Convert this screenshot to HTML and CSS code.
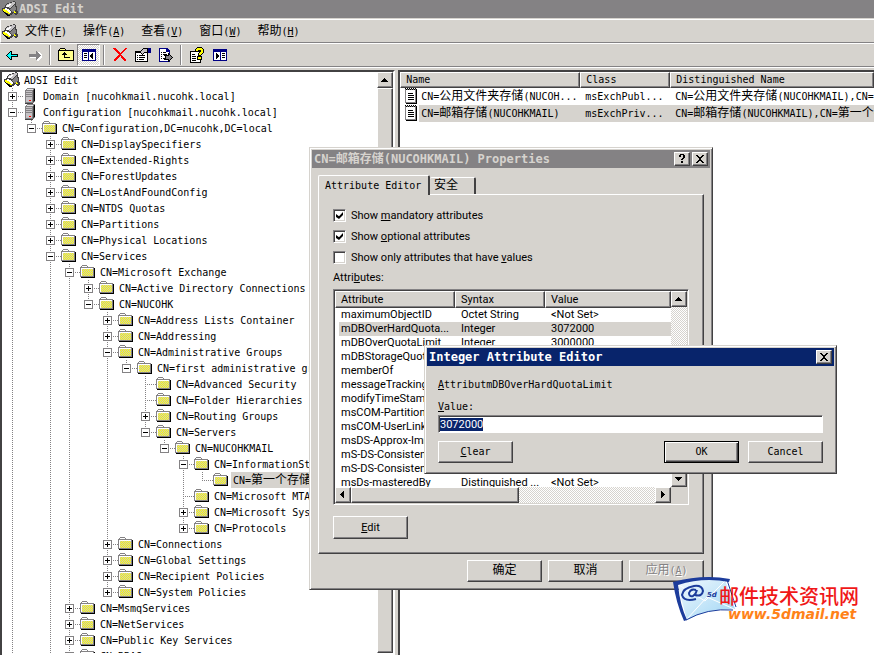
FILE: index.html
```html
<!DOCTYPE html>
<html lang="zh-CN">
<head>
    <meta charset="UTF-8">
    <meta name="viewport" content="width=device-width, initial-scale=1.0">
    <title>ADSI Edit</title>
    <link rel="stylesheet" href="styles.css">
</head>
<body>
    <!-- icon sprite -->
    <svg class="sprite" aria-hidden="true">
        <defs>
            <pattern id="dither" width="2" height="2" patternUnits="userSpaceOnUse">
                <path fill="#c6c3c6" d="M0 0h2v2H0z"/>
                <path fill="#ffff00" d="M0 0h1v1H0zM1 1h1v1H1z"/>
            </pattern>
        </defs>
        <symbol id="i-folder" viewBox="0 0 16 16">
            <path fill="#848284" d="M0 3h1V2h1V1h5v1h1v1h6v10H0V3z"/>
            <path fill="#fff" d="M2 2h5v1H2zM1 4h12v1H1zM1 5h1v7H1z"/>
            <path fill="url(#dither)" d="M2 5h11v7H2z"/>
            <path fill="#000" d="M14 4h1v10H1v-1h13z"/>
        </symbol>
        <symbol id="i-server" viewBox="0 0 16 16">
            <path fill="#848284" d="M4 0h8v13l-2 2H2V2z"/>
            <path fill="#e6e6e6" d="M4 1h6L9 2H3z"/>
            <path fill="#c6c3c6" d="M3 3h6v11H3z"/>
            <path fill="#848284" d="M3 4h6v1H3zM3 6h6v1H3zM3 8h6v1H3z"/>
            <path fill="#424142" d="M10 2h1v12h-1zM2 15h8v1H2z"/>
            <path fill="#000" d="M11 1h1v12h-1z"/>
            <path fill="#f00" d="M6 12h2v1H6z"/>
        </symbol>
        <symbol id="i-app" viewBox="0 0 16 16">
            <path fill="#424142" d="M4 3L9 1l4-1 1 2 1 6v2h1v3l-2 1-3-2-2 2H7L0 10V7l3-1z"/>
            <path fill="#c6c3c6" d="M5 3l7-2 1 1-4 5-5-1z"/>
            <path fill="#fff" d="M5 4l4-1-3 3H4z"/>
            <path fill="#848284" d="M13 3l1 5-3 3-3-2 3-4z"/>
            <path fill="#ffff00" d="M1 8l3 1 4 3-1 1-6-3zM12 10l3 2h-2l-2-1z"/>
            <path fill="#fff" d="M3 7l3 1 4 3-2 1-4-3-2-1z"/>
            <path fill="#000" d="M1 10l6 4h1v1H6L1 11z"/>
        </symbol>
        <symbol id="i-note" viewBox="0 0 16 16">
            <path fill="#848284" d="M2 1h11v14H2z"/>
            <path fill="#fff" d="M3 2h9v12H3z"/>
            <path fill="#000" d="M13 1h1v15H3v-1h10zM2 0h1v1H2zM4 0h1v1H4zM6 0h1v1H6zM8 0h1v1H8zM10 0h1v1h-1zM12 0h1v1h-1zM3 1h1v1H3zM5 1h1v1H5zM7 1h1v1H7zM9 1h1v1H9zM11 1h1v1h-1zM5 5h5v1H5zM5 7h6v1H5zM5 9h6v1H5zM5 11h6v1H5z"/>
        </symbol>
        <symbol id="i-back" viewBox="0 0 16 16">
            <path fill="#000" d="M2 8h1V7h1V6h1V5h1V4h2v3h6v3H8v3H6v-1H5v-1H4v-1H3V9H2z"/>
            <path fill="#00ffff" d="M3 8h1V7h1V6h1V5h1v3h6v1H7v3H6v-1H5v-1H4V9H3z"/>
        </symbol>
        <symbol id="i-forward" viewBox="0 0 16 16">
            <path fill="#fff" d="M3 8h7V5h2l3 3v2l-4 4h-1v-3H3z"/>
            <path fill="#848284" d="M2 7h7V4h1v1h1v1h1v1h1v1h1v1h-1v1h-1v1h-1v1h-1v1H9v-3H2z"/>
        </symbol>
        <symbol id="i-up" viewBox="0 0 16 16">
            <path fill="#000" d="M0 3h1V2h1V1h5v1h1v1h8v11H0z"/>
            <path fill="#ffff8c" d="M2 2h5v1H2zM1 4h14v9H1z"/>
            <path fill="#000" d="M6 5h1v1h1v1h1v1H7v2h5v1H6V8H4V7h1V6h1z"/>
        </symbol>
        <symbol id="i-panes" viewBox="0 0 16 16">
            <path fill="#000084" d="M1 2h14v12H1z"/>
            <path fill="#fff" d="M2 5h5v8H2zM8 5h6v8H8z"/>
            <path fill="#000" d="M3 6h3v1H3zM3 8h3v1H3zM3 10h3v1H3zM12 6v6h-1v-1h-1v-1H9V8h1V7h1V6z"/>
        </symbol>
        <symbol id="i-show" viewBox="0 0 16 16">
            <path fill="#000084" d="M1 2h14v12H1z"/>
            <path fill="#fff" d="M2 5h6v8H2zM9 5h5v8H9z"/>
            <path fill="#000" d="M10 6h3v1h-3zM10 8h3v1h-3zM10 10h3v1h-3zM4 6h1v1h1v1h1v2H6v1H5v1H4z"/>
        </symbol>
        <symbol id="i-delete" viewBox="0 0 16 16">
            <path fill="#f00" d="M1 1h3v1h1v1h1v1h1v1h1v1h1V5h1V4h1V3h1V2h1V1h2v1h-1v1h-1v1h-1v1h-1v1h-1v1h-1v1h1v1h1v1h1v1h1v1h1v2h-2v-1h-1v-1h-1v-1h-1v-1H9V9H8v1H7v1H6v1H5v1H4v1H2v-2h1v-1h1v-1h1V9h1V8h1V7H6V6H5V5H4V4H3V3H2V2H1z"/>
        </symbol>
        <symbol id="i-props" viewBox="0 0 16 16">
            <path fill="#000" d="M0 4h13v11H0z"/>
            <path fill="#fff" d="M1 6h11v8H1z"/>
            <path fill="#000" d="M2 8h1v1H2zM4 8h6v1H4zM2 10h1v1H2zM4 10h6v1H4zM2 12h1v1H2zM4 12h5v1H4zM6 3l2-2h5v5H9L7 8 5 6z"/>
            <path fill="#c6c3c6" d="M7 3l2-1h3v3H9L7 7 6 6z"/>
            <path fill="#000084" d="M13 1h3v5h-3z"/>
        </symbol>
        <symbol id="i-export" viewBox="0 0 16 16">
            <path fill="#000084" d="M1 1h8l3 3v11H1z"/>
            <path fill="#fff" d="M2 2h6v3h3v9H2z"/>
            <path fill="#000" d="M3 5h1v1H3zM5 5h3v1H5zM3 7h1v1H3zM5 7h4v1H5zM3 9h1v1H3zM3 11h1v1H3zM5 11h3v1H5zM6 8h4V6h1v1h1v1h1v1h1v1h1v1h-1v1h-1v1h-1v1h-1v1h-1v-2H6v-1h1v-3H6z"/>
            <path fill="#848284" d="M8 9h3V8l3 2-3 3v-1H8z"/>
        </symbol>
        <symbol id="i-help" viewBox="0 0 16 16">
            <path fill="#000" d="M1 4h11v12H1z"/>
            <path fill="#fff" d="M2 5h9v10H2z"/>
            <path fill="#000" d="M3 7h3v1H3zM3 9h4v1H3zM3 11h4v1H3zM3 13h4v1H3zM8 0h5v1h1v1h1v4h-1v1h-1v1h-1v1h1v4H8V9h1V6h1V4H6V2h1V1h1z"/>
            <path fill="#ffff00" d="M8 1h5v1h1v4h-1v1h-1v1h-2V6h1V5h1V3H9v1H7V2h1zM9 10h3v2H9z"/>
        </symbol>
        <symbol id="i-close" viewBox="0 0 12 10">
            <path fill="#000" d="M2 1h2v1h1v1h2V2h1V1h2v1H9v1H8v1H7v2h1v1h1v1h1v1H8V8H7V7H5v1H4v1H2V8h1V7h1V6h1V4H4V3H3V2H2z"/>
        </symbol>
        <symbol id="i-q" viewBox="0 0 12 10">
            <path fill="#000" d="M3 1h1V0h4v1h1v3H8v1H7v1H5V5h1V4h1V1H5v2H3zM5 7h2v2H5z"/>
        </symbol>
        <symbol id="i-tri-up" viewBox="0 0 8 8"><path d="M3 2h1v1h1v1h1v1h1v1H0V5h1V4h1V3h1z"/></symbol>
        <symbol id="i-tri-down" viewBox="0 0 8 8"><path d="M0 2h7v1H6v1H5v1H4v1H3V5H2V4H1V3H0z"/></symbol>
        <symbol id="i-tri-left" viewBox="0 0 8 8"><path d="M5 0v7H4V6H3V5H2V4H1V3h1V2h1V1h1V0z"/></symbol>
        <symbol id="i-tri-right" viewBox="0 0 8 8"><path d="M2 0v7h1V6h1V5h1V4h1V3H5V2H4V1H3V0z"/></symbol>
    </svg>

    <div class="app">
        <header class="app-title">
            <svg class="icon"><use href="#i-app"/></svg>
            <span>ADSI Edit</span>
        </header>

        <nav class="menubar">
            <svg class="icon"><use href="#i-app"/></svg>
            <button class="menu"><span class="zh">文件</span>(<u>F</u>)</button>
            <button class="menu"><span class="zh">操作</span>(<u>A</u>)</button>
            <button class="menu"><span class="zh">查看</span>(<u>V</u>)</button>
            <button class="menu"><span class="zh">窗口</span>(<u>W</u>)</button>
            <button class="menu"><span class="zh">帮助</span>(<u>H</u>)</button>
        </nav>

        <div class="toolbar">
            <button class="tool" aria-label="Back"><svg class="icon"><use href="#i-back"/></svg></button>
            <button class="tool" aria-label="Forward"><svg class="icon"><use href="#i-forward"/></svg></button>
            <span class="sep"></span>
            <button class="tool" aria-label="Up one level"><svg class="icon"><use href="#i-up"/></svg></button>
            <button class="tool pressed" aria-label="Show/Hide tree"><svg class="icon"><use href="#i-panes"/></svg></button>
            <span class="sep"></span>
            <button class="tool" aria-label="Delete"><svg class="icon"><use href="#i-delete"/></svg></button>
            <button class="tool" aria-label="Properties"><svg class="icon"><use href="#i-props"/></svg></button>
            <button class="tool" aria-label="Export list"><svg class="icon"><use href="#i-export"/></svg></button>
            <span class="sep"></span>
            <button class="tool" aria-label="Help"><svg class="icon"><use href="#i-help"/></svg></button>
            <button class="tool" aria-label="Show pane"><svg class="icon"><use href="#i-show"/></svg></button>
        </div>

        <main class="panes">
            <section class="pane tree-pane">
                <div class="tree-view">
                    <div class="node root"><svg class="icon"><use href="#i-app"/></svg><span class="label">ADSI Edit</span></div>
                    <ul class="tree">
                        <li><div class="node"><i class="exp plus"></i><svg class="icon"><use href="#i-server"/></svg><span class="label wide">Domain [nucohkmail.nucohk.local]</span></div></li>
                        <li class="more"><div class="node"><i class="exp"></i><svg class="icon"><use href="#i-server"/></svg><span class="label wide">Configuration [nucohkmail.nucohk.local]</span></div>
                            <ul>
                                <li><div class="node"><i class="exp"></i><svg class="icon"><use href="#i-folder"/></svg><span class="label">CN=Configuration,DC=nucohk,DC=local</span></div>
                                    <ul>
                                        <li><div class="node"><i class="exp plus"></i><svg class="icon"><use href="#i-folder"/></svg><span class="label">CN=DisplaySpecifiers</span></div></li>
                                        <li><div class="node"><i class="exp plus"></i><svg class="icon"><use href="#i-folder"/></svg><span class="label">CN=Extended-Rights</span></div></li>
                                        <li><div class="node"><i class="exp plus"></i><svg class="icon"><use href="#i-folder"/></svg><span class="label">CN=ForestUpdates</span></div></li>
                                        <li><div class="node"><i class="exp plus"></i><svg class="icon"><use href="#i-folder"/></svg><span class="label">CN=LostAndFoundConfig</span></div></li>
                                        <li><div class="node"><i class="exp plus"></i><svg class="icon"><use href="#i-folder"/></svg><span class="label">CN=NTDS Quotas</span></div></li>
                                        <li><div class="node"><i class="exp plus"></i><svg class="icon"><use href="#i-folder"/></svg><span class="label">CN=Partitions</span></div></li>
                                        <li><div class="node"><i class="exp plus"></i><svg class="icon"><use href="#i-folder"/></svg><span class="label">CN=Physical Locations</span></div></li>
                                        <li class="more"><div class="node"><i class="exp"></i><svg class="icon"><use href="#i-folder"/></svg><span class="label">CN=Services</span></div>
                                            <ul>
                                                <li><div class="node"><i class="exp"></i><svg class="icon"><use href="#i-folder"/></svg><span class="label">CN=Microsoft Exchange</span></div>
                                                    <ul>
                                                        <li><div class="node"><i class="exp plus"></i><svg class="icon"><use href="#i-folder"/></svg><span class="label">CN=Active Directory Connections</span></div></li>
                                                        <li><div class="node"><i class="exp"></i><svg class="icon"><use href="#i-folder"/></svg><span class="label">CN=NUCOHK</span></div>
                                                            <ul>
                                                                <li><div class="node"><i class="exp plus"></i><svg class="icon"><use href="#i-folder"/></svg><span class="label">CN=Address Lists Container</span></div></li>
                                                                <li><div class="node"><i class="exp plus"></i><svg class="icon"><use href="#i-folder"/></svg><span class="label">CN=Addressing</span></div></li>
                                                                <li><div class="node"><i class="exp"></i><svg class="icon"><use href="#i-folder"/></svg><span class="label">CN=Administrative Groups</span></div>
                                                                    <ul>
                                                                        <li><div class="node"><i class="exp"></i><svg class="icon"><use href="#i-folder"/></svg><span class="label">CN=first administrative group</span></div>
                                                                            <ul>
                                                                                <li><div class="node"><i class="leaf"></i><svg class="icon"><use href="#i-folder"/></svg><span class="label">CN=Advanced Security</span></div></li>
                                                                                <li><div class="node"><i class="leaf"></i><svg class="icon"><use href="#i-folder"/></svg><span class="label">CN=Folder Hierarchies</span></div></li>
                                                                                <li><div class="node"><i class="exp plus"></i><svg class="icon"><use href="#i-folder"/></svg><span class="label">CN=Routing Groups</span></div></li>
                                                                                <li><div class="node"><i class="exp"></i><svg class="icon"><use href="#i-folder"/></svg><span class="label">CN=Servers</span></div>
                                                                                    <ul>
                                                                                        <li><div class="node"><i class="exp"></i><svg class="icon"><use href="#i-folder"/></svg><span class="label">CN=NUCOHKMAIL</span></div>
                                                                                            <ul>
                                                                                                <li><div class="node"><i class="exp"></i><svg class="icon"><use href="#i-folder"/></svg><span class="label">CN=InformationStore</span></div>
                                                                                                    <ul>
                                                                                                        <li><div class="node"><i class="leaf"></i><svg class="icon"><use href="#i-folder"/></svg><span class="label selected">CN=<span class="zh">第一个存储组</span></span></div></li>
                                                                                                    </ul>
                                                                                                </li>
                                                                                                <li><div class="node"><i class="leaf"></i><svg class="icon"><use href="#i-folder"/></svg><span class="label">CN=Microsoft MTA</span></div></li>
                                                                                                <li><div class="node"><i class="exp plus"></i><svg class="icon"><use href="#i-folder"/></svg><span class="label">CN=Microsoft System</span></div></li>
                                                                                                <li><div class="node"><i class="exp plus"></i><svg class="icon"><use href="#i-folder"/></svg><span class="label">CN=Protocols</span></div></li>
                                                                                            </ul>
                                                                                        </li>
                                                                                    </ul>
                                                                                </li>
                                                                            </ul>
                                                                        </li>
                                                                    </ul>
                                                                </li>
                                                                <li><div class="node"><i class="exp plus"></i><svg class="icon"><use href="#i-folder"/></svg><span class="label">CN=Connections</span></div></li>
                                                                <li><div class="node"><i class="exp plus"></i><svg class="icon"><use href="#i-folder"/></svg><span class="label">CN=Global Settings</span></div></li>
                                                                <li><div class="node"><i class="exp plus"></i><svg class="icon"><use href="#i-folder"/></svg><span class="label">CN=Recipient Policies</span></div></li>
                                                                <li><div class="node"><i class="exp plus"></i><svg class="icon"><use href="#i-folder"/></svg><span class="label">CN=System Policies</span></div></li>
                                                            </ul>
                                                        </li>
                                                    </ul>
                                                </li>
                                                <li><div class="node"><i class="exp plus"></i><svg class="icon"><use href="#i-folder"/></svg><span class="label">CN=MsmqServices</span></div></li>
                                                <li><div class="node"><i class="exp plus"></i><svg class="icon"><use href="#i-folder"/></svg><span class="label">CN=NetServices</span></div></li>
                                                <li><div class="node"><i class="exp plus"></i><svg class="icon"><use href="#i-folder"/></svg><span class="label">CN=Public Key Services</span></div></li>
                                                <li class="more"><div class="node"><i class="exp plus"></i><svg class="icon"><use href="#i-folder"/></svg><span class="label">CN=RRAS</span></div></li>
                                            </ul>
                                        </li>
                                    </ul>
                                </li>
                            </ul>
                        </li>
                    </ul>
                </div>
                <div class="vscroll">
                    <button class="arrow" aria-label="Scroll up"><svg><use href="#i-tri-up"/></svg></button>
                    <div class="thumb"></div>
                </div>
            </section>

            <section class="pane list-pane">
                <table class="objects">
                    <thead>
                        <tr><th class="col-name">Name</th><th class="col-class">Class</th><th>Distinguished Name</th></tr>
                    </thead>
                    <tbody>
                        <tr>
                            <td><div class="cell"><svg class="icon"><use href="#i-note"/></svg><span>CN=<span class="zh">公用文件夹存储</span>(NUCOH...</span></div></td>
                            <td>msExchPubl...</td>
                            <td>CN=<span class="zh">公用文件夹存储</span>(NUCOHKMAIL),CN=<span class="zh">第一个存储组</span></td>
                        </tr>
                        <tr class="selected">
                            <td><div class="cell"><svg class="icon"><use href="#i-note"/></svg><span>CN=<span class="zh">邮箱存储</span>(NUCOHKMAIL)</span></div></td>
                            <td>msExchPriv...</td>
                            <td>CN=<span class="zh">邮箱存储</span>(NUCOHKMAIL),CN=<span class="zh">第一个存储组</span></td>
                        </tr>
                    </tbody>
                </table>
            </section>
        </main>
    </div>

    <!-- Properties dialog -->
    <div class="dialog properties" role="dialog" aria-labelledby="propsTitle">
        <div class="dialog-title inactive">
            <h2 id="propsTitle">CN=<span class="zh">邮箱存储</span>(NUCOHKMAIL) Properties</h2>
            <button class="caption" aria-label="Help"><svg><use href="#i-q"/></svg></button>
            <button class="caption" aria-label="Close"><svg><use href="#i-close"/></svg></button>
        </div>
        <div class="dialog-body">
            <div class="tabs" role="tablist">
                <button class="tab active" role="tab" aria-selected="true">Attribute Editor</button>
                <button class="tab" role="tab"><span class="zh">安全</span></button>
            </div>
            <div class="tab-panel">
                <label class="check"><input type="checkbox" checked><span>Show <u>m</u>andatory attributes</span></label>
                <label class="check"><input type="checkbox" checked><span>Show <u>o</u>ptional attributes</span></label>
                <label class="check"><input type="checkbox"><span>Show only attributes that have <u>v</u>alues</span></label>
                <div class="list-label">Attri<u>b</u>utes:</div>
                <div class="listview">
                    <div class="rows">
                        <table class="attributes">
                            <thead>
                                <tr><th class="col-attr">Attribute</th><th class="col-syntax">Syntax</th><th>Value</th></tr>
                            </thead>
                            <tbody>
                                <tr><td>maximumObjectID</td><td>Octet String</td><td>&lt;Not Set&gt;</td></tr>
                                <tr class="selected"><td>mDBOverHardQuota...</td><td>Integer</td><td>3072000</td></tr>
                                <tr><td>mDBOverQuotaLimit</td><td>Integer</td><td>3000000</td></tr>
                                <tr><td>mDBStorageQuota</td><td></td><td></td></tr>
                                <tr><td>memberOf</td><td></td><td></td></tr>
                                <tr><td>messageTracking</td><td></td><td></td></tr>
                                <tr><td>modifyTimeStamp</td><td></td><td></td></tr>
                                <tr><td>msCOM-PartitionSet</td><td></td><td></td></tr>
                                <tr><td>msCOM-UserLink</td><td></td><td></td></tr>
                                <tr><td>msDS-Approx-Imm</td><td></td><td></td></tr>
                                <tr><td>mS-DS-Consistenc</td><td></td><td></td></tr>
                                <tr><td>mS-DS-Consistenc</td><td></td><td></td></tr>
                                <tr><td>msDs-masteredBy</td><td>Distinguished ...</td><td>&lt;Not Set&gt;</td></tr>
                            </tbody>
                        </table>
                    </div>
                    <div class="vscroll track">
                        <button class="arrow" aria-label="Scroll up"><svg><use href="#i-tri-up"/></svg></button>
                        <div class="gap"></div>
                        <button class="arrow" aria-label="Scroll down"><svg><use href="#i-tri-down"/></svg></button>
                    </div>
                    <div class="hscroll track">
                        <button class="arrow" aria-label="Scroll left"><svg><use href="#i-tri-left"/></svg></button>
                        <div class="thumb half"></div>
                        <div class="gap"></div>
                        <button class="arrow" aria-label="Scroll right"><svg><use href="#i-tri-right"/></svg></button>
                    </div>
                </div>
                <button class="btn edit"><u>E</u>dit</button>
            </div>
            <div class="actions">
                <button class="btn"><span class="zh">确定</span></button>
                <button class="btn"><span class="zh">取消</span></button>
                <button class="btn" disabled><span class="zh">应用</span>(<u>A</u>)</button>
            </div>
        </div>
    </div>

    <!-- Site mark -->
    <div class="mark">
        <svg class="mark-logo" viewBox="0 0 62 46" aria-hidden="true">
            <defs>
                <linearGradient id="sky" x1="0" y1="0" x2="1" y2="1">
                    <stop offset="0" stop-color="#f4fafe"/>
                    <stop offset="1" stop-color="#9cd4f4"/>
                </linearGradient>
            </defs>
            <path fill="url(#sky)" d="M4 6Q28 0 52 3L62 32Q36 31 14 43Z"/>
            <path fill="none" stroke="#fff" stroke-width="1" d="M14 42L34 20 61 32M6 8L32 24 52 4"/>
            <path fill="#1c3c9c" d="M0 5Q30-3 57 2L56 5Q30 0 5 8Q7 28 14 43L11 44Q3 26 0 5Z"/>
            <path fill="none" stroke="#1c3c9c" stroke-width="1" d="M54 3L63 30M13 43Q34 31 60 33"/>
            <path fill="none" stroke="#1c3c9c" stroke-width="2" d="M23 13Q18 11 16 16Q16 20 20 19Q23 17 24 13L22 18Q29 20 30 14Q29 8 21 9Q10 11 9 18Q11 25 23 22"/>
            <text class="mark-small" x="34" y="20">5d</text>
        </svg>
        <div class="mark-text">
            <div class="mark-name">邮件技术资讯网</div>
            <div class="mark-url">www.5dmail.net</div>
        </div>
    </div>

    <!-- Integer editor dialog -->
    <div class="dialog editor" role="dialog" aria-labelledby="editorTitle">
        <div class="dialog-title">
            <h2 id="editorTitle">Integer Attribute Editor</h2>
            <button class="caption" aria-label="Close"><svg><use href="#i-close"/></svg></button>
        </div>
        <div class="editor-body">
            <div class="attr-name"><u>A</u>ttributmDBOverHardQuotaLimit</div>
            <label for="attrValue"><u>V</u>alue:</label>
            <input type="text" id="attrValue" class="value-input" value="3072000">
            <div class="editor-actions">
                <button class="btn"><u>C</u>lear</button>
                <button class="btn default">OK</button>
                <button class="btn">Cancel</button>
            </div>
        </div>
    </div>

    <script>
        // open the editor with its value selected
        const attrValue = document.getElementById('attrValue');
        attrValue.focus();
        attrValue.select();
    </script>
</body>
</html>
```
FILE: styles.css
```css
* {
    box-sizing: border-box;
}
body {
    margin: 0;
    overflow: hidden;
    background: #d6d3ce;
    color: #000;
    font-family: "DejaVu Sans Mono", "Noto Sans CJK SC", monospace;
    font-size: 10px;
    line-height: 16px;
}
button, input {
    font: inherit;
    color: inherit;
}
button {
    margin: 0;
    padding: 0;
    border: 0;
    background: #d6d3ce;
    white-space: nowrap;
}
svg {
    display: block;
    shape-rendering: crispEdges;
}
ul {
    margin: 0;
    padding: 0;
    list-style: none;
}
u {
    text-underline-offset: 1px;
}
.sprite {
    position: absolute;
    width: 0;
    height: 0;
}
.icon {
    width: 16px;
    height: 16px;
    flex: none;
}
.zh {
    font-family: "Noto Sans CJK SC", sans-serif;
    font-size: 12px;
    line-height: 12px;
}

/* main window */
.app {
    display: flex;
    flex-direction: column;
    height: 100vh;
}
.app-title {
    display: flex;
    align-items: center;
    gap: 1px;
    height: 18px;
    padding-left: 2px;
    background: #848284;
    color: #d6d3ce;
    font-size: 12px;
    font-weight: bold;
}
.menubar, .toolbar {
    display: flex;
    align-items: center;
    height: 24px;
    border: 1px solid #fff;
    border-right: 0;
    border-bottom-color: #848284;
}
.menubar {
    margin-top: 1px;
    padding-top: 2px;
}
.toolbar {
    border-left: 0;
}
.menubar .icon {
    margin: 0 1px;
}
.menu {
    padding: 0 8px;
}
.menu:first-of-type {
    padding-left: 6px;
}
.tool {
    display: flex;
    align-items: center;
    justify-content: center;
    width: 23px;
    height: 22px;
}
.tool.pressed {
    border: 1px solid;
    border-color: #848284 #fff #fff #848284;
    background: repeating-conic-gradient(#fff 0 25%, #d6d3ce 0 50%) 0 0 / 2px 2px;
}
.sep {
    width: 2px;
    height: 20px;
    margin: 0 3px;
    border-left: 1px solid #848284;
    border-right: 1px solid #fff;
}
.panes {
    display: flex;
    flex: 1;
    min-height: 0;
    gap: 3px;
    padding-top: 2px;
    border-top: 1px solid #fff;
}
.pane {
    border: 2px solid;
    border-color: #424142 #fff #fff #424142;
    border-bottom: 0;
    background: #fff;
    overflow: hidden;
}
.tree-pane {
    display: flex;
    flex: none;
    width: calc(45% + 2px);
    padding-bottom: 2px;
}
.tree-view {
    flex: 1;
    overflow: hidden;
    padding-left: 1px;
}
.list-pane {
    flex: 1;
    border-right: 0;
}

/* tree */
.node {
    display: flex;
    align-items: center;
    height: 16px;
    white-space: nowrap;
}
.node.root {
    padding-left: 1px;
}
.tree li {
    background: repeating-linear-gradient(#848284 0 1px, transparent 1px 2px) 9px 0 / 1px 100% no-repeat;
}
.tree ul li:last-child:not(.more) {
    background-size: 1px 8px;
}
.tree ul {
    margin-left: 19px;
}
.exp, .leaf {
    flex: none;
    width: 20px;
    height: 9px;
    margin-top: 1px;
    background: repeating-linear-gradient(to right, #848284 0 1px, transparent 1px 2px) 9px 4px / 11px 1px no-repeat;
}
.exp {
    background:
        linear-gradient(#000, #000) 7px 4px / 5px 1px no-repeat,
        linear-gradient(#fff, #fff) 6px 1px / 7px 7px no-repeat,
        linear-gradient(#848284, #848284) 5px 0 / 9px 9px no-repeat,
        repeating-linear-gradient(to right, #848284 0 1px, transparent 1px 2px) 15px 4px / 5px 1px no-repeat;
}
.exp.plus {
    background:
        linear-gradient(#000, #000) 7px 4px / 5px 1px no-repeat,
        linear-gradient(#000, #000) 9px 2px / 1px 5px no-repeat,
        linear-gradient(#fff, #fff) 6px 1px / 7px 7px no-repeat,
        linear-gradient(#848284, #848284) 5px 0 / 9px 9px no-repeat,
        repeating-linear-gradient(to right, #848284 0 1px, transparent 1px 2px) 15px 4px / 5px 1px no-repeat;
}
.label {
    height: 16px;
    margin-left: 2px;
    padding: 0 2px;
    line-height: 17px;
}
.label.selected {
    background: #d6d3ce;
}

/* scrollbars */
.vscroll {
    display: flex;
    flex-direction: column;
    width: 16px;
}
.hscroll {
    display: flex;
    height: 16px;
}
.track {
    background: repeating-conic-gradient(#fff 0 25%, #d6d3ce 0 50%) 0 0 / 2px 2px;
}
.arrow, .thumb, .btn, .caption, th {
    border: 1px solid;
    border-color: #fff #424142 #424142 #fff;
    background: #d6d3ce;
    box-shadow: inset -1px -1px #848284;
}
.arrow {
    display: flex;
    align-items: center;
    justify-content: center;
    flex: none;
    width: 16px;
    height: 16px;
}
.arrow svg {
    width: 8px;
    height: 8px;
}
.thumb, .gap {
    flex: 1;
}
.thumb.half {
    flex: none;
    width: 50%;
}

/* tables */
table {
    width: 100%;
    border-collapse: separate;
    border-spacing: 0;
    table-layout: fixed;
}
th {
    padding: 0 5px;
    text-align: left;
    font-weight: normal;
}
td {
    padding: 0 5px;
    overflow: hidden;
    white-space: nowrap;
}
.objects th {
    height: 16px;
    line-height: 14px;
}
.objects td {
    height: 17px;
    line-height: 17px;
}
.col-name {
    width: 180px;
}
.col-class {
    width: 90px;
}
.objects td:first-child {
    padding: 0 0 0 3px;
}
.cell {
    display: flex;
    height: 17px;
}
.cell > span {
    flex: 1;
    padding-left: 2px;
}
.objects .selected td + td,
.objects .selected .cell > span {
    background: #d6d3ce;
}

/* dialogs */
.dialog {
    position: absolute;
    padding: 1px;
    border: 1px solid;
    border-color: #d6d3ce #424142 #424142 #d6d3ce;
    background: #d6d3ce;
    box-shadow: inset 1px 1px #fff, inset -1px -1px #848284;
}
.properties {
    left: 309px;
    top: 147px;
    width: 404px;
}
.editor {
    left: 424px;
    top: 345px;
    width: 413px;
}
.dialog-title {
    display: flex;
    align-items: center;
    gap: 2px;
    height: 18px;
    margin: 1px;
    padding: 0 2px;
    background: #08246b;
    color: #fff;
}
.dialog-title.inactive {
    background: #848284;
    color: #d6d3ce;
}
.dialog-title h2 {
    flex: 1;
    margin: 0;
    font-size: 12px;
    font-weight: bold;
}
.caption {
    display: flex;
    align-items: center;
    justify-content: center;
    width: 16px;
    height: 14px;
}
.caption svg {
    width: 12px;
    height: 10px;
}
.btn {
    width: 75px;
    height: 22px;
    line-height: 16px;
}
.btn:disabled {
    color: #848284;
    text-shadow: 1px 1px #fff;
}
.btn.default {
    border-color: #000;
    box-shadow: inset 1px 1px #fff, inset -1px -1px #424142, inset -2px -2px #848284;
}
.dialog-body {
    padding: 6px 7px 6px;
}
.tabs {
    display: flex;
    align-items: flex-end;
}
.tab {
    height: 17px;
    width: 46px;
    padding: 0 4px;
    border: 1px solid #fff;
    border-right: 2px solid #424142;
    border-bottom: 0;
    border-left: 0;
    border-radius: 2px 2px 0 0;
    text-align: left;
}
.tab.active {
    position: relative;
    width: 112px;
    height: 20px;
    margin-bottom: -1px;
    padding: 0 6px;
    border-left: 1px solid #fff;
}
.tab-panel {
    padding: 10px 14px 14px;
    border: 1px solid;
    border-color: #fff #424142 #424142 #fff;
    box-shadow: inset -1px -1px #848284;
    font-family: Roboto, sans-serif;
    font-size: 11px;
}
.check {
    display: flex;
    align-items: center;
    gap: 5px;
    height: 21px;
}
.check input {
    appearance: none;
    width: 13px;
    height: 13px;
    margin: 0;
    border: 1px solid;
    border-color: #848284 #fff #fff #848284;
    background: #fff;
    box-shadow: inset 1px 1px #424142, inset -1px -1px #d6d3ce;
}
.check input:checked::before {
    content: "";
    display: block;
    width: 7px;
    height: 7px;
    margin: 2px;
    background: #000;
    clip-path: polygon(0 28%, 43% 60%, 100% 0, 100% 43%, 43% 100%, 0 70%);
}
.list-label {
    margin-top: 2px;
    margin-bottom: 3px;
}
.listview {
    display: grid;
    grid-template-columns: 1fr 16px;
    grid-template-rows: 196px 16px;
    padding: 1px;
    border: 1px solid;
    border-color: #848284 #fff #fff #848284;
    box-shadow: inset 1px 1px #424142;
}
.rows {
    overflow: hidden;
    background: #fff;
}
.attributes th {
    height: 17px;
    line-height: 15px;
}
.attributes td {
    height: 14px;
    padding: 0 6px;
    line-height: 14px;
}
.attributes .selected {
    background: linear-gradient(#d6d3ce, #d6d3ce) 4px 0 no-repeat;
}
.col-attr {
    width: 120px;
}
.col-syntax {
    width: 90px;
}
.edit {
    display: block;
    height: 23px;
    margin-top: 11px;
}
.actions {
    display: flex;
    justify-content: flex-end;
    gap: 6px;
    margin-top: 6px;
}

/* integer editor */
.editor-body {
    display: flex;
    flex-direction: column;
    padding: 10px 12px 9px;
}
.attr-name {
    margin-bottom: 6px;
}
.value-input {
    height: 18px;
    padding: 0 1px;
    border: 1px solid;
    border-color: #848284 #fff #fff #848284;
    outline: 0;
    background: #fff;
    box-shadow: inset 1px 1px #424142;
    font-family: Roboto, sans-serif;
    font-size: 11px;
}
.value-input::selection {
    background: #08246b;
    color: #fff;
}
.editor-actions {
    display: flex;
    gap: 9px;
    margin-top: 8px;
}
.editor-actions .btn:first-child {
    margin-right: auto;
}

/* site mark */
.mark {
    position: absolute;
    left: 673px;
    top: 577px;
    display: flex;
}
.mark svg {
    shape-rendering: auto;
    overflow: visible;
}
.mark-logo {
    width: 62px;
    height: 46px;
    margin-right: -16px;
}
.mark-small {
    fill: #1c3c9c;
    font: italic bold 7px "DejaVu Sans", sans-serif;
}
.mark-text {
    z-index: 1;
    padding-top: 8px;
}
.mark-name {
    color: #f01818;
    font: 500 20px/22px "Noto Sans CJK SC", sans-serif;
}
.mark-url {
    padding-left: 9px;
    color: #ff8218;
    font: italic bold 14px/14px "DejaVu Sans", sans-serif;
}
```
